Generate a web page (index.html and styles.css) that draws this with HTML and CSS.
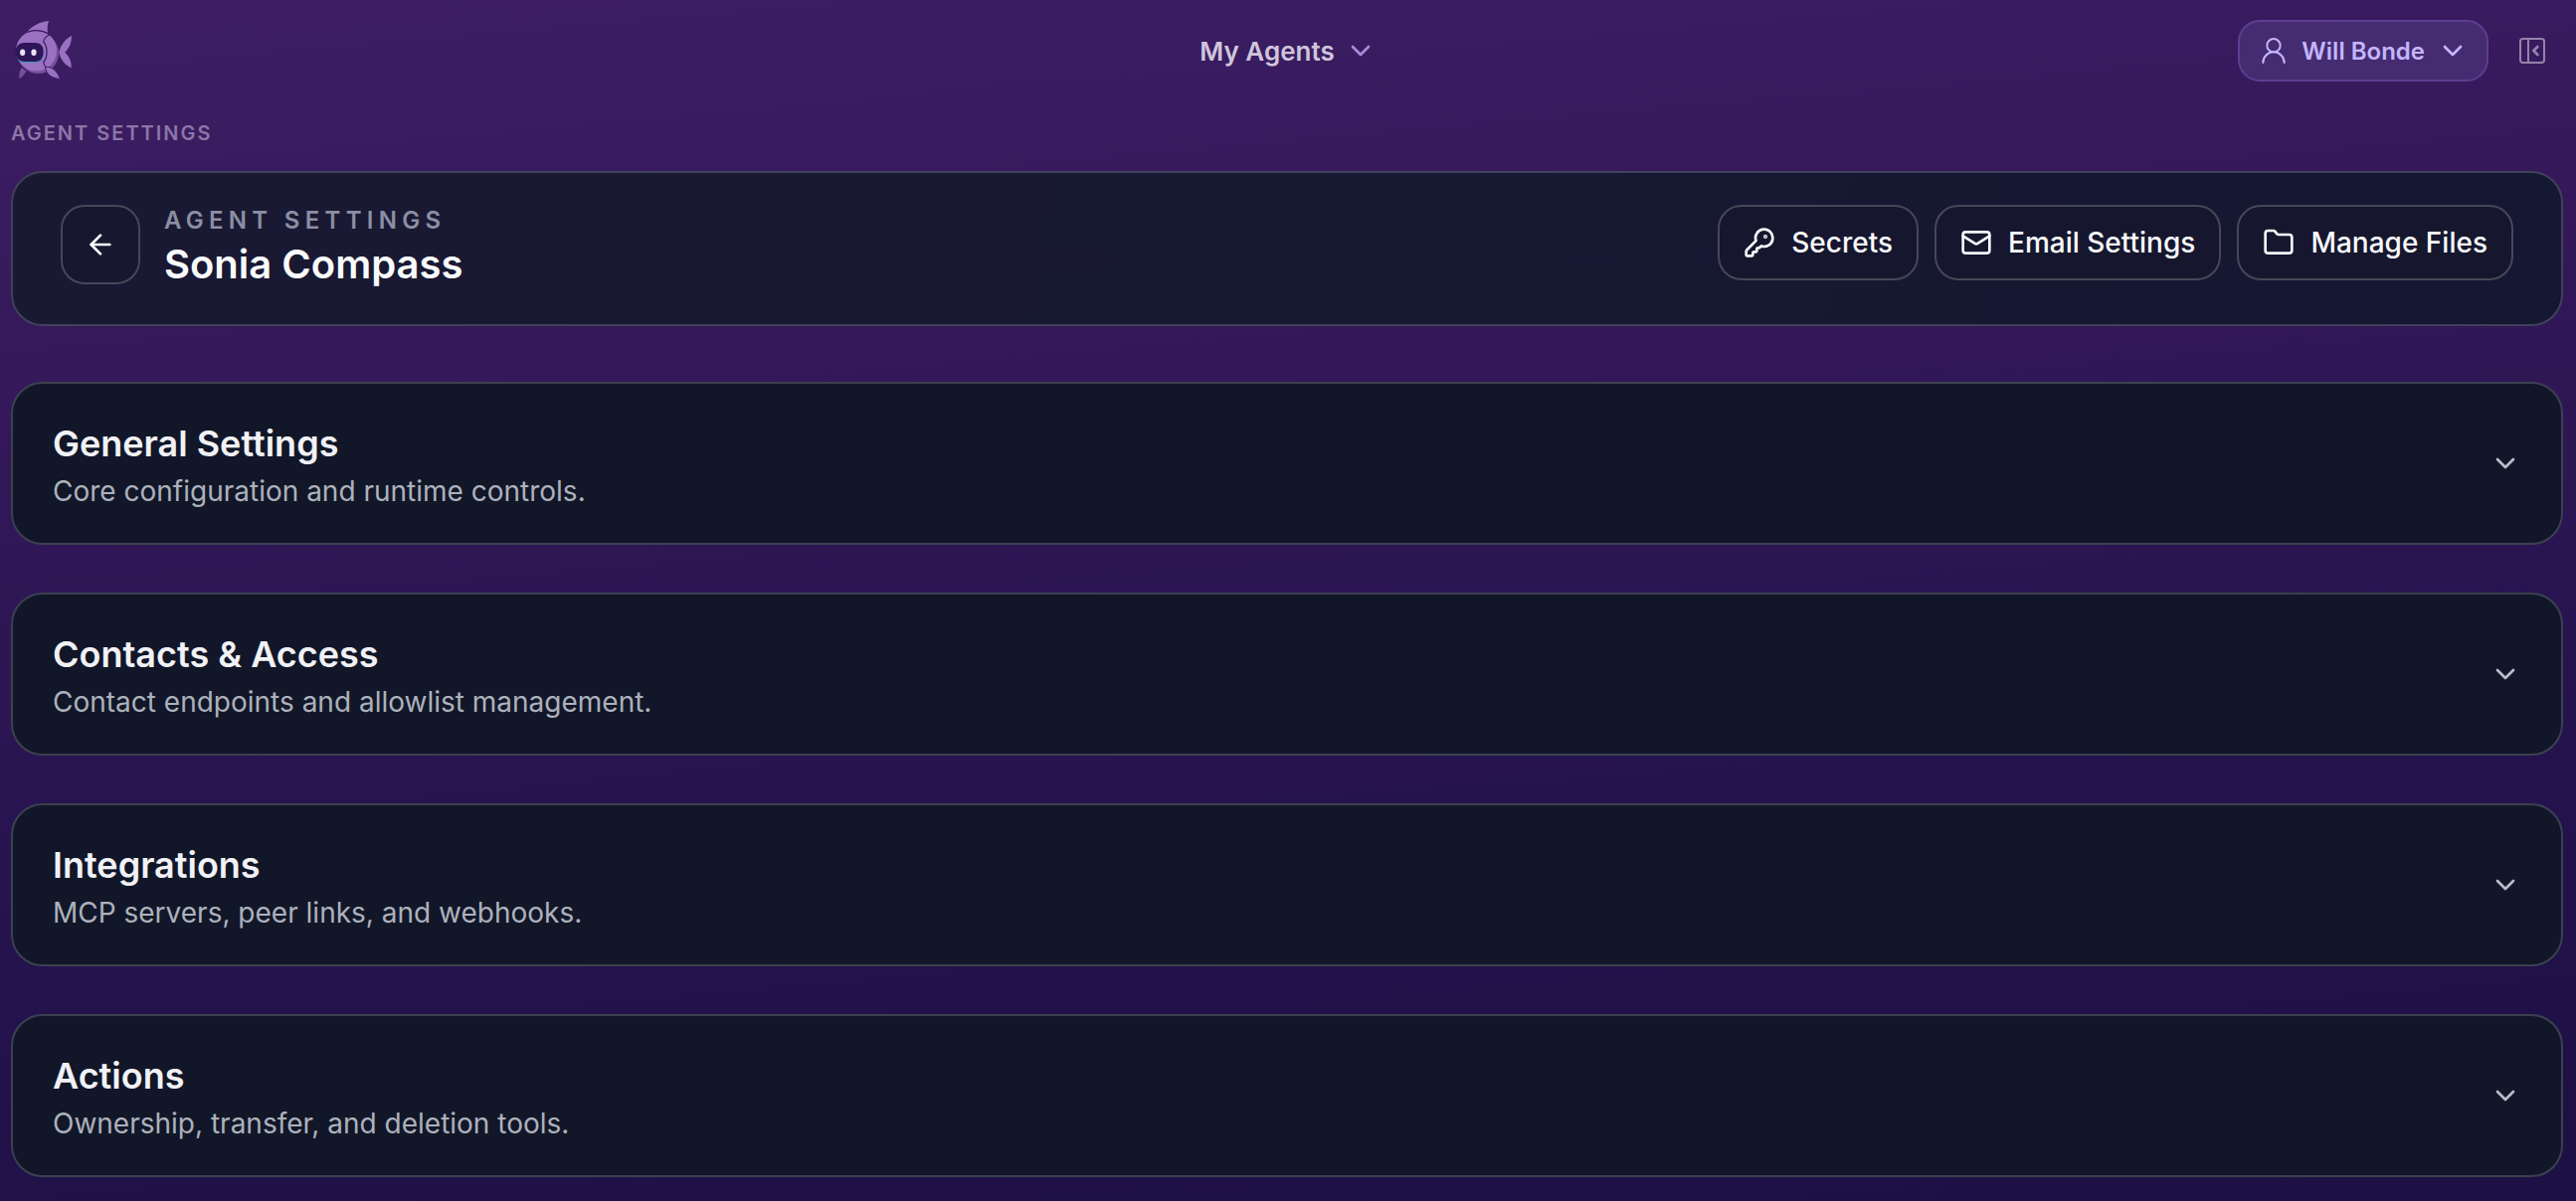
FILE: index.html
```html
<!DOCTYPE html>
<html lang="en">
<head>
    <meta charset="UTF-8">
    <meta name="viewport" content="width=device-width, initial-scale=1.0">
    <title>Agent Settings</title>
    <link rel="stylesheet" href="styles.css">
</head>
<body>

<!-- Shared icons -->
<svg class="sprite" aria-hidden="true">
    <symbol id="chevron" viewBox="0 0 24 24"><path d="m6 9 6 6 6-6"/></symbol>
</svg>

<header class="topbar">
    <a class="logo" href="#" aria-label="Home">
        <svg viewBox="0 0 60 60" aria-hidden="true">
            <path d="M13.500 11C18 5 26 1 35 0C33.500 4 33.500 8 34 12Q24 7 13.500 11Z" fill="#9a70c2"/>
            <path d="M5.300 58C5 53 6 49 8 47.300L12.700 51C10 53 9 57 5.300 58Z" fill="#75519a"/>
            <circle cx="24.500" cy="32.500" r="20.500" fill="#75519a"/>
            <circle cx="22.500" cy="30" r="20.500" fill="#9a70c2"/>
            <path d="M45.300 31.700C47 24 52 18 58 15C58 22 56 27 51.300 31.700C56 36 58 41 57.700 47.300C51 44 47 39 45.300 31.700Z" fill="#9a70c2"/>
            <path d="M13 11.500Q24 7 36 13.700Q30 17 29.700 21.300Q33 24 33 31.700Q33 38 29.700 41.300Q30 44 32.700 48" fill="none" stroke="#3b1c62" stroke-width="1.200"/>
            <path d="M31.500 46.500C38 45 44 51 46.500 58.500C39 58 32 54 31.500 46.500Z" fill="#9a70c2" stroke="#3b1c62" stroke-width="1"/>
            <path d="M2 34C3 39 6 42 11 42H21Q29.700 42 29.700 33V29Z" fill="#3a9abf"/>
            <path d="M1.500 33V29Q4 22 10 22H21Q29.700 22 29.700 31Q29.700 41 21 41H11Q3 41 1.500 33Z" fill="#2e1557"/>
            <ellipse cx="8.700" cy="31.700" rx="2.600" ry="3.200" fill="#e9e2f2"/>
            <ellipse cx="20" cy="31.700" rx="2.600" ry="3.200" fill="#e9e2f2"/>
        </svg>
    </a>
    <button class="nav-btn" type="button">My Agents <svg class="icon"><use href="#chevron"/></svg></button>
    <div class="account">
        <button class="user-btn" type="button">
            <svg class="icon thin" viewBox="0 0 24 24"><circle cx="12" cy="8" r="5"/><path d="M20 21a8 8 0 0 0-16 0"/></svg>
            Will Bonde
            <svg class="icon"><use href="#chevron"/></svg>
        </button>
        <button class="panel-btn" type="button" aria-label="Toggle side panel">
            <svg class="icon" viewBox="0 0 24 24"><rect x="3" y="3" width="18" height="18" rx="2"/><path d="M9 3v18"/><path d="m16 15-3-3 3-3" stroke-width="2"/></svg>
        </button>
    </div>
</header>

<main>
    <p class="page-label">Agent Settings</p>

    <section class="agent-header">
        <a class="back-btn" href="#" aria-label="Back">
            <svg class="icon" viewBox="0 0 24 24"><path d="m12 19-7-7 7-7"/><path d="M19 12H5"/></svg>
        </a>
        <div class="agent-title">
            <p>Agent Settings</p>
            <h1>Sonia Compass</h1>
        </div>
        <div class="actions">
            <button class="action-btn" type="button">
                <svg class="icon" viewBox="0 0 24 24"><path d="M2.586 17.414A2 2 0 0 0 2 18.828V21a1 1 0 0 0 1 1h3a1 1 0 0 0 1-1v-1a1 1 0 0 1 1-1h1a1 1 0 0 0 1-1v-1a1 1 0 0 1 1-1h.172a2 2 0 0 0 1.414-.586l.814-.814a6.5 6.5 0 1 0-4-4z"/><circle cx="16.500" cy="7.500" r=".5"/></svg>
                Secrets
            </button>
            <button class="action-btn" type="button">
                <svg class="icon" viewBox="0 0 24 24"><rect x="2" y="4" width="20" height="16" rx="2"/><path d="m22 7-8.970 5.700a1.940 1.940 0 0 1-2.060 0L2 7"/></svg>
                Email Settings
            </button>
            <button class="action-btn" type="button">
                <svg class="icon" viewBox="0 0 24 24"><path d="M20 20a2 2 0 0 0 2-2V8a2 2 0 0 0-2-2h-7.900a2 2 0 0 1-1.690-.900L9.600 3.900A2 2 0 0 0 7.930 3H4a2 2 0 0 0-2 2v13a2 2 0 0 0 2 2Z"/></svg>
                Manage Files
            </button>
        </div>
    </section>

    <div class="sections">
        <button class="card" type="button" aria-expanded="false">
            <span class="card-text">
                <span class="card-title">General Settings</span>
                <span class="card-desc">Core configuration and runtime controls.</span>
            </span>
            <svg class="icon"><use href="#chevron"/></svg>
        </button>
        <button class="card" type="button" aria-expanded="false">
            <span class="card-text">
                <span class="card-title">Contacts &amp; Access</span>
                <span class="card-desc">Contact endpoints and allowlist management.</span>
            </span>
            <svg class="icon"><use href="#chevron"/></svg>
        </button>
        <button class="card" type="button" aria-expanded="false">
            <span class="card-text">
                <span class="card-title">Integrations</span>
                <span class="card-desc">MCP servers, peer links, and webhooks.</span>
            </span>
            <svg class="icon"><use href="#chevron"/></svg>
        </button>
        <button class="card" type="button" aria-expanded="false">
            <span class="card-text">
                <span class="card-title">Actions</span>
                <span class="card-desc">Ownership, transfer, and deletion tools.</span>
            </span>
            <svg class="icon"><use href="#chevron"/></svg>
        </button>
    </div>
</main>

</body>
</html>
```
FILE: styles.css
```css
* {
    box-sizing: border-box;
}
body {
    margin: 0;
    min-height: 100vh;
    font-family: Inter, "Liberation Sans", sans-serif;
    color: #f8fafc;
    background: linear-gradient(175deg, #3d1e64 0%, #341859 30%, #25134e 65%, #1c1044 100%);
}
button {
    font: inherit;
    color: inherit;
    background: none;
    border: none;
    padding: 0;
    cursor: pointer;
}
p, h1 {
    margin: 0;
}
.sprite {
    display: none;
}
.icon {
    width: 32px;
    height: 32px;
    flex: none;
    fill: none;
    stroke: currentColor;
    stroke-width: 2;
    stroke-linecap: round;
    stroke-linejoin: round;
}

/* Top bar */
.topbar {
    display: grid;
    grid-template-columns: 1fr auto 1fr;
    align-items: center;
    height: 102px;
    padding: 0 14px;
}
.logo {
    width: 60px;
    height: 60px;
}
.logo svg {
    display: block;
}
.nav-btn {
    display: flex;
    align-items: center;
    gap: 10px;
    font-size: 26px;
    font-weight: 600;
    color: #cfc5dc;
}
.nav-btn .icon {
    color: #a78bda;
}
.account {
    display: flex;
    justify-content: flex-end;
    align-items: center;
    gap: 28px;
    padding-right: 14px;
}
.user-btn {
    display: flex;
    align-items: center;
    gap: 12px;
    height: 62px;
    padding: 0 18px;
    border: 2px solid #5b3f91;
    border-radius: 22px;
    background: #452b70;
    color: #c4b5fd;
    font-size: 24px;
    font-weight: 600;
}
.thin, .panel-btn .icon {
    stroke-width: 1.5;
}
.panel-btn {
    display: flex;
    color: #9483aa;
}

.page-label {
    padding: 20px 0 26px;
    font-size: 20px;
    line-height: 24px;
    font-weight: 600;
    letter-spacing: 2px;
    text-transform: uppercase;
    color: #8b76a6;
}
main {
    padding: 0 13px 24px 11px;
}

/* Agent header */
.agent-header {
    display: flex;
    align-items: flex-start;
    padding: 32px 48px;
    border: 2px solid #41415a;
    border-radius: 32px;
    background: linear-gradient(100deg, #1a1933, #151832);
}
.back-btn {
    display: flex;
    align-items: center;
    justify-content: center;
    width: 80px;
    height: 80px;
    border: 2px solid #474759;
    border-radius: 24px;
    background: #17182f;
    color: #f8fafc;
}
.agent-title {
    flex: 1;
    padding-left: 24px;
}
.agent-title p {
    font-size: 24px;
    line-height: 32px;
    font-weight: 600;
    letter-spacing: 0.22em;
    text-transform: uppercase;
    color: #8b8fa3;
}
.agent-title h1 {
    font-size: 40px;
    line-height: 56px;
    font-weight: 600;
}
.actions {
    display: flex;
    gap: 16px;
}
.action-btn {
    display: flex;
    align-items: center;
    gap: 16px;
    height: 76px;
    padding: 0 24px;
    border: 2px solid #474759;
    border-radius: 24px;
    background: #16172e;
    font-size: 28px;
    font-weight: 500;
}

/* Collapsed sections */
.sections {
    display: flex;
    flex-direction: column;
    gap: 48px;
    margin-top: 56px;
}
.card {
    display: flex;
    align-items: center;
    justify-content: space-between;
    padding: 32px 40px;
    border: 2px solid #3b414f;
    border-radius: 32px;
    background: #111728;
    text-align: left;
}
.card .icon {
    color: #b9bdca;
}
.card-text {
    display: flex;
    flex-direction: column;
}
.card-title {
    font-size: 36px;
    line-height: 56px;
    font-weight: 600;
    color: #f1f1f6;
}
.card-desc {
    font-size: 28px;
    line-height: 40px;
    color: #adb1bc;
}
```
